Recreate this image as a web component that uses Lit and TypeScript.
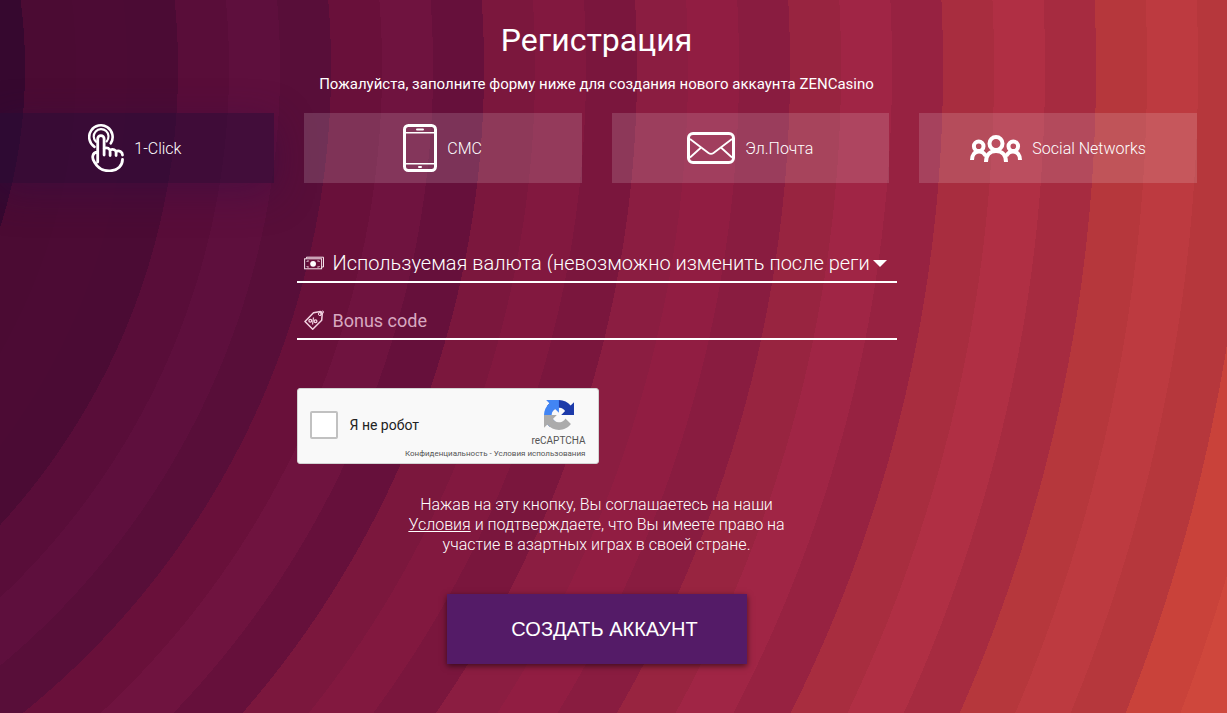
import { LitElement, html, css, svg, unsafeCSS } from "lit";
import { customElement, state } from "lit/decorators.js";

// Colours of the concentric rings behind the form: [edge, middle, edge] of each ring.
const RINGS = [
  ["#4b0b33", "#4c0b34", "#4b0b34"],
  ["#590d39", "#5e0f3d", "#580e39"],
  ["#69103a", "#6f133f", "#66103b"],
  ["#7b173d", "#82183f", "#7a163d"],
  ["#8b1d41", "#911d42", "#891c40"],
  ["#982440", "#a02545", "#972241"],
  ["#a82d3f", "#b02f44", "#a62b40"],
  ["#b6373c", "#bd3a40", "#b6373c"],
  ["#c9423a", "#cf473c", "#c9423a"],
];
const FIRST_RADIUS = 523;
const BAND = 51;

const ringStops = [
  `#36082f ${FIRST_RADIUS}px`,
  ...RINGS.flat().map((colour, i) => {
    const inner = FIRST_RADIUS + i * BAND;
    return `${colour} ${inner}px ${inner + BAND}px`;
  }),
].join(", ");

const clickIcon = svg`<svg width="36" height="48" viewBox="0 0 36 48" fill="none" stroke="#fff" stroke-linecap="round" stroke-linejoin="round">
  <path stroke-width="2.6" d="M6.500 22.800A11.700 11.700 0 1 1 22.800 19.300"/>
  <path stroke-width="2.2" d="M8 17.800A7.400 7.400 0 1 1 18.600 17.400"/>
  <path stroke-width="2.8" d="M9.700 38V14.800a3.200 3.200 0 0 1 6.400 0V31M16.100 24.600c3-1.600 6 0 6 2.600V31.500M22.100 26c3-1.400 6 0 6 2.400V31.500M28.100 27.400c3-1.400 6.400.6 6.400 3.600M9.700 28C3.600 28.500 3.800 34.500 6.600 38.400C10.500 45.500 17 47 22 46.800C30 46.400 34.500 41.500 34.500 35.500"/>
</svg>`;

const phoneIcon = svg`<svg width="34" height="48" viewBox="0 0 34 48" fill="none" stroke="#fff">
  <rect x="1.500" y="1.500" width="31" height="45" rx="4" stroke-width="3"/>
  <path stroke-width="1.500" d="M2 8.700h30M2 39.700h30"/>
  <path stroke-width="2" stroke-linecap="round" d="M14 5.500h6M16 43h2"/>
</svg>`;

const mailIcon = svg`<svg width="48" height="32" viewBox="0 0 48 32" fill="none" stroke="#fff">
  <rect x="1.500" y="1.500" width="45" height="29" rx="4.500" stroke-width="3"/>
  <path stroke-width="1.800" d="M3 7l18.500 14q2.500 1.800 5 0L45 7M3 25.500L13.500 16M45 25.500L34.500 16"/>
</svg>`;

const peopleIcon = svg`<svg width="52" height="27" viewBox="0 0 52 27" fill="none" stroke="#fff" stroke-width="4">
  <circle cx="26" cy="8.500" r="6.500"/><circle cx="8.700" cy="11.300" r="4.800"/><circle cx="43.300" cy="11.300" r="4.800"/>
  <path d="M16 27c0-7 4-11 10-11s10 4 10 11M2 25c0-5 2.500-8.500 7-8.500 3.500 0 5.500 2 6.700 4.500M50 25c0-5-2.500-8.500-7-8.500-3.500 0-5.500 2-6.700 4.500"/>
</svg>`;

const moneyIcon = svg`<svg width="20" height="14" viewBox="0 0 20 14" fill="none" stroke="#f6e4ec">
  <path d="M2.500 2.500V1.200h17v9.800h-2"/><rect x=".6" y="2.800" width="17" height="10"/>
  <path stroke-width=".8" d="M3 6V5h2M15.200 6V5h-2M3 10v1h2M15.200 10v1h-2"/><circle cx="9.100" cy="7.800" r="2.900" fill="#fff" stroke="none"/>
</svg>`;

const tagIcon = svg`<svg width="20" height="20" viewBox="0 0 20 20" fill="none" stroke="#f3d3e2" stroke-linejoin="round">
  <path stroke-width="1.500" d="M9.500 2.800l7-1.200 1.800 1.400-.6 7.200-9 9L1 11.500z"/>
  <circle cx="16" cy="4" r="1.600"/><path d="M16 4c1.500-3 3-3.500 3.500-2.500S18.500 4.500 16 5"/>
  <circle stroke-width="1.300" cx="6.300" cy="10.700" r="1.400"/><circle stroke-width="1.300" cx="11.500" cy="11.300" r="1.400"/><path stroke-width="1.200" d="M9.500 7.500l-1 7"/>
</svg>`;

const captchaIcon = svg`<svg width="30" height="30" viewBox="0 0 64 64">
  <path fill="#1c3aa9" d="M64 31.955l-.033-1.370V4.687l-7.160 7.160C50.948 4.674 42.033.093 32.050.093c-10.400 0-19.622 4.960-25.458 12.640l11.736 11.860a15.550 15.550 0 0 1 4.754-5.334c2.050-1.600 4.952-2.906 8.968-2.906.485 0 .860.057 1.135.163 4.976.393 9.288 3.140 11.828 7.124l-8.307 8.307L64 31.953"/>
  <path fill="#4285f4" d="M31.862.094l-1.370.033H4.594l7.160 7.160C4.580 13.147 0 22.060 0 32.046c0 10.400 4.960 19.622 12.640 25.458L24.500 45.768a15.550 15.550 0 0 1-5.334-4.754c-1.600-2.050-2.906-4.952-2.906-8.968 0-.485.057-.860.163-1.135.393-4.976 3.140-9.288 7.124-11.828l8.307 8.307L31.860.095"/>
  <path fill="#ababab" d="M.001 32.045l.033 1.370v25.898l7.160-7.160c5.860 7.173 14.774 11.754 24.760 11.754 10.400 0 19.622-4.960 25.458-12.640L45.675 39.407a15.550 15.550 0 0 1-4.754 5.334c-2.050 1.600-4.952 2.906-8.968 2.906-.485 0-.860-.057-1.135-.163-4.976-.393-9.288-3.140-11.828-7.124l8.307-8.307L0 32.048"/>
</svg>`;

const METHODS = [
  { id: "click", label: "1-Click", icon: clickIcon },
  { id: "sms", label: "СМС", icon: phoneIcon },
  { id: "mail", label: "Эл.Почта", icon: mailIcon },
  { id: "social", label: "Social Networks", icon: peopleIcon },
];

@customElement("captcha-box")
export class CaptchaBox extends LitElement {
  static styles = css`
    :host {
      display: flex;
      justify-content: space-between;
      box-sizing: border-box;
      width: 302px;
      height: 76px;
      padding: 0 12px;
      background: #f9f9f9;
      border: 1px solid #d3d3d3;
      border-radius: 3px;
      color: #222;
      font-family: Roboto, sans-serif;
      font-weight: 400;
    }
    .check {
      display: flex;
      align-items: center;
      gap: 12px;
      height: 71px;
      font-size: 14px;
      white-space: nowrap;
    }
    .box {
      appearance: none;
      width: 28px;
      height: 28px;
      margin: 0;
      background: #fff;
      border: 2px solid #c1c1c1;
      border-radius: 2px;
    }
    .box:checked {
      background: #4285f4;
    }
    .brand {
      display: flex;
      flex-direction: column;
      align-items: flex-end;
      width: 190px;
      margin-left: -100px;
      padding-top: 11px;
      color: #555;
    }
    .logo {
      display: block;
      width: 54px;
      height: 34px;
      text-align: center;
    }
    .name {
      font-size: 10px;
      line-height: 14px;
    }
    .links {
      font-size: 8px;
      line-height: 12px;
      white-space: nowrap;
    }
    .links a {
      color: inherit;
      text-decoration: none;
    }
  `;

  render() {
    return html`
      <label class="check"><input class="box" type="checkbox" />Я не робот</label>
      <div class="brand">
        <span class="logo">${captchaIcon}</span>
        <span class="name">reCAPTCHA</span>
        <span class="links"><a href="#privacy">Конфиденциальность</a> - <a href="#terms">Условия использования</a></span>
      </div>
    `;
  }
}

@customElement("app-root")
export class AppRoot extends LitElement {
  @state() private method = "click";

  static styles = css`
    :host {
      display: block;
      box-sizing: border-box;
      min-height: 100vh;
      overflow: hidden;
      background: radial-gradient(circle at -498px 68px, ${unsafeCSS(ringStops)});
      color: #fff;
      font-family: Roboto, "Noto Sans", sans-serif;
      font-size: 16px;
      font-weight: 300;
      line-height: 20px;
    }
    .page {
      display: flex;
      flex-direction: column;
      align-items: center;
      margin-left: -4px;
      padding: 20px 30px 48px 0;
    }
    .title {
      margin: 0;
      font-size: 32px;
      line-height: 40px;
      font-weight: 400;
    }
    .lead {
      margin: 14px 0 19px;
      font-size: 15px;
      font-weight: 400;
    }
    .methods {
      display: grid;
      grid-template-columns: repeat(4, 1fr);
      gap: 30px;
      width: 100%;
    }
    .method {
      display: flex;
      align-items: center;
      justify-content: center;
      gap: 10px;
      height: 70px;
      padding: 0;
      border: 0;
      background: rgba(255, 255, 255, 0.15);
      color: inherit;
      font: inherit;
      line-height: 22px;
      cursor: pointer;
    }
    .method span {
      padding-top: 2px;
    }
    .method.active {
      background: rgba(38, 12, 56, 0.5);
      box-shadow: 0 10px 40px rgba(45, 12, 70, 0.4);
    }
    .form {
      display: flex;
      flex-direction: column;
      align-items: center;
      width: 100%;
      max-width: 600px;
      margin-top: 62px;
    }
    .field {
      display: flex;
      align-items: center;
      gap: 9px;
      box-sizing: border-box;
      width: 100%;
      height: 38px;
      margin-bottom: 19px;
      padding: 0 10px 0 7px;
      border-bottom: 2px solid #fff;
    }
    .field svg {
      flex: none;
    }
    .control {
      flex: 1;
      min-width: 0;
      height: 36px;
      padding: 0;
      border: 0;
      outline: 0;
      appearance: none;
      background: none;
      color: #fff;
      font: inherit;
      font-size: 20px;
    }
    .currency {
      margin-right: -5px;
    }
    .control option {
      color: #222;
    }
    .code {
      font-size: 18px;
      font-weight: 400;
    }
    .code::placeholder {
      color: #d8a8c0;
      opacity: 1;
    }
    captcha-box {
      align-self: flex-start;
      margin-top: 29px;
    }
    .terms {
      max-width: 390px;
      margin: 31px 0 39px;
      text-align: center;
    }
    .terms a {
      color: inherit;
    }
    .submit {
      width: 300px;
      height: 70px;
      padding: 0 0 0 16px;
      border: 0;
      background: #541b67;
      box-shadow: 0 2px 6px rgba(0, 0, 0, 0.55);
      color: #fff;
      font-family: "Liberation Sans", sans-serif;
      font-size: 20px;
      cursor: pointer;
    }
  `;

  render() {
    return html`
      <main class="page">
        <h1 class="title">Регистрация</h1>
        <p class="lead">Пожалуйста, заполните форму ниже для создания нового аккаунта ZENCasino</p>
        <nav class="methods">
          ${METHODS.map(
            (m) => html`<button
              type="button"
              class="method ${m.id === this.method ? "active" : ""}"
              @click=${() => (this.method = m.id)}
            >
              ${m.icon}<span>${m.label}</span>
            </button>`
          )}
        </nav>
        <form class="form" @submit=${(e: Event) => e.preventDefault()}>
          <label class="field">
            ${moneyIcon}
            <select class="control currency" aria-label="Используемая валюта">
              <option>Используемая валюта (невозможно изменить после реги</option>
            </select>
            <svg width="14" height="7" viewBox="0 0 14 7"><path fill="#fff" d="M0 0h14L7 7z" /></svg>
          </label>
          <label class="field">
            ${tagIcon}
            <input class="control code" type="text" placeholder="Bonus code" aria-label="Bonus code" />
          </label>
          <captcha-box></captcha-box>
          <p class="terms">
            Нажав на эту кнопку, Вы соглашаетесь на наши <a href="#terms">Условия</a> и подтверждаете, что Вы имеете
            право на участие в азартных играх в своей стране.
          </p>
          <button class="submit" type="submit">СОЗДАТЬ АККАУНТ</button>
        </form>
      </main>
    `;
  }
}
